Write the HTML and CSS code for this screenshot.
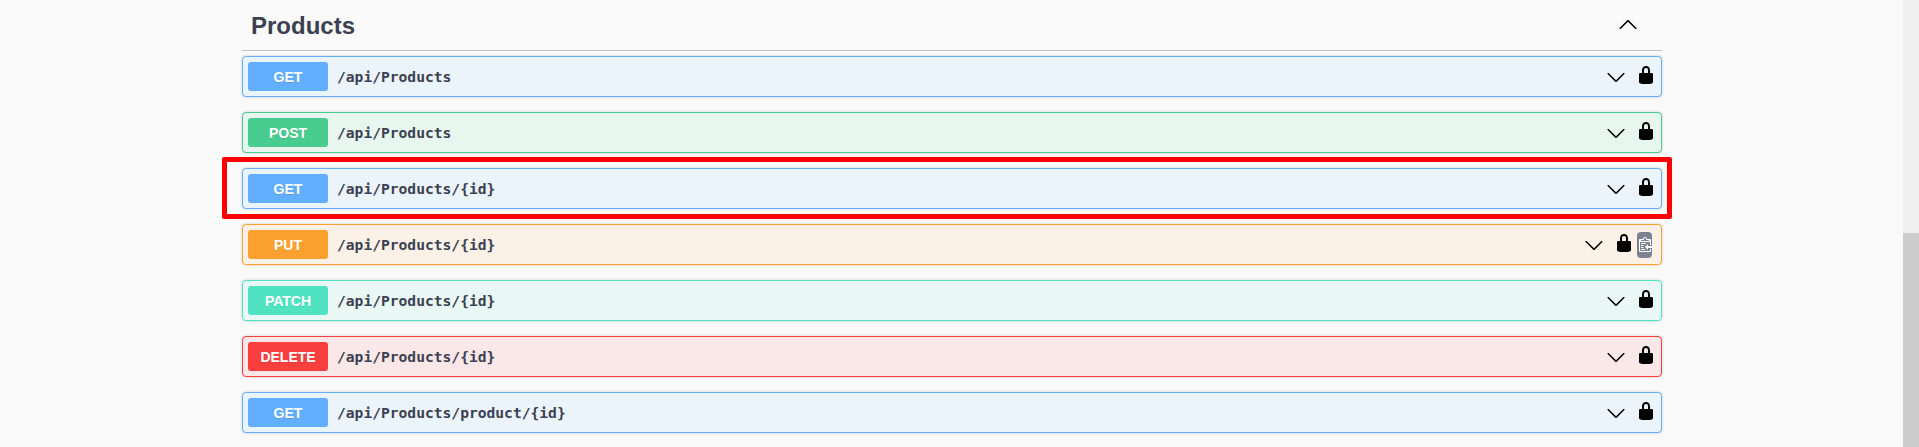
FILE: index.html
```html
<!DOCTYPE html>
<html lang="en">
<head>
<meta charset="utf-8">
<title>Products API</title>
<link rel="stylesheet" href="styles.css">
</head>
<body>
<svg class="defs" aria-hidden="true">
  <symbol id="down" viewBox="0 0 20 20"><path d="M17.418 6.109c.272-.268.709-.268.979 0s.271.701 0 .969l-7.908 7.83c-.27.268-.707.268-.979 0l-7.908-7.83c-.27-.268-.27-.701 0-.969.271-.268.709-.268.979 0L10 13.25z"/></symbol>
  <symbol id="up" viewBox="0 0 20 20"><path d="M17.418 14.908c.272.268.709.268.979 0s.271-.701 0-.969l-7.908-7.83c-.27-.268-.707-.268-.979 0l-7.908 7.83c-.27.268-.27.701 0 .969.271.268.709.268.979 0L10 7.767z"/></symbol>
  <symbol id="lock" viewBox="0 0 20 20"><path d="M15.8 8H14V5.6C14 2.703 12.665 1 10 1 7.334 1 6 2.703 6 5.6V8H4c-.553 0-1 .646-1 1.199V17c0 .549.428 1.139.951 1.307l1.197.387C5.672 18.861 6.55 19 7.1 19h5.8c.549 0 1.428-.139 1.951-.307l1.196-.387c.524-.167.953-.757.953-1.306V9.199C17 8.646 16.352 8 15.8 8zM12 8H8V5.199C8 3.754 8.797 3 10 3c1.203 0 2 .754 2 2.199V8z"/></symbol>
</svg>
<div class="page">
  <main class="section">
    <header class="tag">
      <h3 class="tag-title">Products</h3>
      <svg class="icon"><use href="#up"/></svg>
    </header>
    <div class="operations">
      <div class="op get"><span class="method">GET</span><span class="path">/api/Products</span><svg class="icon"><use href="#down"/></svg><svg class="icon lock"><use href="#lock"/></svg></div>
      <div class="op post"><span class="method">POST</span><span class="path">/api/Products</span><svg class="icon"><use href="#down"/></svg><svg class="icon lock"><use href="#lock"/></svg></div>
      <div class="op get marked"><span class="method">GET</span><span class="path">/api/Products/{id}</span><svg class="icon"><use href="#down"/></svg><svg class="icon lock"><use href="#lock"/></svg></div>
      <div class="op put"><span class="method">PUT</span><span class="path">/api/Products/{id}</span><svg class="icon"><use href="#down"/></svg><svg class="icon lock"><use href="#lock"/></svg><span class="copy"><svg class="copy-icon" viewBox="0 0 15 16"><path transform="translate(2 -1)" fill-rule="evenodd" d="M2 13h4v1H2v-1zm5-6H2v1h5V7zm2 3V8l-3 3 3 3v-2h5v-2H9zM4.500 9H2v1h2.500V9zM2 12h2.500v-1H2v1zm9 1h1v2c-.02.28-.11.52-.3.7-.19.18-.42.28-.7.3H1c-.55 0-1-.45-1-1V4c0-.55.45-1 1-1h3c0-1.110.89-2 2-2 1.110 0 2 .89 2 2h3c.55 0 1 .45 1 1v5h-1V6H1v9h10v-2zM2 5h8c0-.55-.45-1-1-1H8c-.55 0-1-.45-1-1s-.45-1-1-1-1 .45-1 1-.45 1-1 1H3c-.55 0-1 .45-1 1z"/></svg></span></div>
      <div class="op patch"><span class="method">PATCH</span><span class="path">/api/Products/{id}</span><svg class="icon"><use href="#down"/></svg><svg class="icon lock"><use href="#lock"/></svg></div>
      <div class="op delete"><span class="method">DELETE</span><span class="path">/api/Products/{id}</span><svg class="icon"><use href="#down"/></svg><svg class="icon lock"><use href="#lock"/></svg></div>
      <div class="op get"><span class="method">GET</span><span class="path">/api/Products/product/{id}</span><svg class="icon"><use href="#down"/></svg><svg class="icon lock"><use href="#lock"/></svg></div>
    </div>
  </main>
  <div class="scrollbar"><div class="thumb"></div></div>
</div>
</body>
</html>
```
FILE: styles.css
```css
* { box-sizing: border-box; }

body {
  margin: 0;
  background: #fafafa;
  color: #3b4151;
  font-family: "Liberation Sans", Arial, sans-serif;
}

.defs { display: none; }

.page {
  display: flex;
  justify-content: space-between;
  height: 447px;
  padding-left: 242px;
  overflow: hidden;
}

.section { width: 1420px; }

.tag {
  display: flex;
  align-items: flex-start;
  justify-content: space-between;
  height: 51px;
  padding: 14px 24px 0 9px;
  border-bottom: 1px solid rgba(59, 65, 81, .3);
}

.tag-title {
  margin: 0;
  font-size: 24px;
  line-height: 24px;
}

.operations {
  display: flex;
  flex-direction: column;
  gap: 15px;
  padding-top: 5px;
}

.op {
  position: relative;
  display: flex;
  align-items: center;
  height: 41px;
  padding: 0 5px;
  border: 1px solid var(--accent);
  border-radius: 4px;
  background: var(--tint);
  box-shadow: 0 0 3px rgba(0, 0, 0, .19);
}

.get { --accent: #61affe; --tint: #ebf3fb; }
.post { --accent: #49cc90; --tint: #e8f6f0; }
.put { --accent: #fca130; --tint: #fbf1e6; }
.patch { --accent: #50e3c2; --tint: #e9f8f5; }
.delete { --accent: #f93e3e; --tint: #fae7e7; }

/* Callout frame drawn over the highlighted operation */
.marked::after {
  content: "";
  position: absolute;
  inset: -12px -11px -11px -21px;
  border: 5px solid #f00;
  border-radius: 2px;
}

.method {
  width: 80px;
  height: 29px;
  border-radius: 3px;
  background: var(--accent);
  color: #fff;
  font-size: 14px;
  font-weight: 700;
  line-height: 30px;
  text-align: center;
  text-shadow: 0 1px 0 rgba(0, 0, 0, .1);
}

.path {
  flex: 1;
  padding-left: 9px;
  font-family: "DejaVu Sans Mono", monospace;
  font-size: 14.61px;
  font-weight: 700;
  line-height: 20px;
}

.icon { flex: none; width: 20px; height: 20px; }

.lock { margin: 0 0 3px 10px; }

.copy {
  width: 15px;
  height: 26px;
  margin: 1px 4px 0 3px;
  padding-top: 5px;
  border-radius: 4px;
  background: #7d8293;
  overflow: hidden;
}

.copy-icon { display: block; width: 15px; height: 16px; fill: #fff; }

.scrollbar { width: 16px; background: #f0f0f0; }

.thumb { height: 214px; margin-top: 233px; background: #cdcdcd; }
```
